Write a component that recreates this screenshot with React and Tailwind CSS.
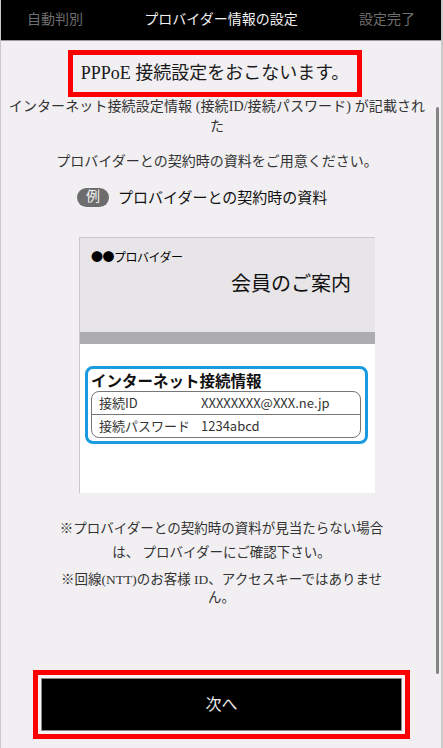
const serif = { fontFamily: '"Liberation Serif", "Noto Sans CJK JP", serif' };

function Header() {
  return (
    <div className="h-[40px] bg-black border-b border-[#9a9a9a] box-content flex items-center justify-between pl-[26px] pr-[26px] text-[14px] leading-none">
      <span className="text-[#6f6f6f]">自動判別</span>
      <span className="text-[#f2f2f2]">プロバイダー情報の設定</span>
      <span className="text-[#6f6f6f]">設定完了</span>
    </div>
  );
}

function SampleCard() {
  const sans = { fontFamily: '"Noto Sans CJK JP", "Noto Sans", sans-serif' };
  return (
    <div
      className="ml-[78px] mt-[30px] w-[296px] h-[256px] border-l border-t border-[#c8c8c8] bg-white flex flex-col"
      style={sans}
    >
      <div className="h-[94px] bg-[#e7e5e8] flex flex-col pt-[11px]">
        <div className="pl-[11px] text-[12px] leading-[16px] text-black tracking-[-0.5px]">●●プロバイダー</div>
        <div className="mt-[5px] self-end pr-[24px] text-[20px] leading-[26px] text-[#111]">会員のご案内</div>
      </div>
      <div className="h-[12px] bg-[#adacae]" />
      <div className="ml-[5px] mt-[22px] w-[283px] h-[78px] border-[3px] border-[#1a9be0] rounded-[8px] flex flex-col px-[3px]">
        <div className="text-[15.5px] leading-[22px] font-bold text-[#111]">インターネット接続情報</div>
        <div className="w-[270px] h-[47px] border border-[#777] rounded-[8px] flex flex-col text-[13px] text-[#333]">
          <div className="flex-1 flex items-center border-b border-[#777] pl-[7px]">
            <span className="w-[102px]">接続ID</span>
            <span>XXXXXXXX@XXX.ne.jp</span>
          </div>
          <div className="flex-1 flex items-center pl-[7px]">
            <span className="w-[102px]">接続パスワード</span>
            <span>1234abcd</span>
          </div>
        </div>
      </div>
    </div>
  );
}

export default function App() {
  return (
    <div
      className="relative w-[443px] h-[748px] overflow-hidden bg-[#f1eff2] border-l border-r-2 border-[#c9c9c9] flex flex-col"
      style={serif}
    >
      <Header />

      <div className="ml-[67px] mt-[9px] w-[294px] h-[47px] border-[5px] border-[#ff0000] flex items-center justify-center text-[18px] text-[#1a1a1a] whitespace-nowrap">
        PPPoE 接続設定をおこないます。
      </div>

      <p className="w-[432px] text-center text-[14px] leading-[20px] text-[#333] whitespace-nowrap tracking-[0.1px]">
        インターネット接続設定情報 (接続ID/接続パスワード) が記載され
        <br />た
      </p>

      <p className="w-[432px] mt-[15px] text-center text-[14px] leading-[20px] text-[#333] whitespace-nowrap">
        プロバイダーとの契約時の資料をご用意ください。
      </p>

      <div className="ml-[76px] mt-[15px] h-[20px] flex items-center gap-[9px]">
        <span className="w-[32px] h-[19px] rounded-full bg-[#6d6d6d] text-[#f4f4f4] text-[14px] leading-none flex items-center justify-center">
          例
        </span>
        <span
          className="text-[15px] text-[#111]"
          style={{ fontFamily: '"Noto Sans CJK JP", sans-serif' }}
        >
          プロバイダーとの契約時の資料
        </span>
      </div>

      <SampleCard />

      <p className="mt-[24px] w-[441px] text-center text-[13.5px] leading-[24px] text-[#333] whitespace-nowrap">
        ※プロバイダーとの契約時の資料が見当たらない場合
        <br />は、 プロバイダーにご確認下さい。
      </p>
      <p className="mt-[6px] w-[441px] text-center text-[13.5px] leading-[18px] text-[#333] whitespace-nowrap">
        ※回線(NTT)のお客様 ID、アクセスキーではありませ
        <br />ん。
      </p>

      <div className="ml-[32px] mt-[63px] w-[377px] h-[69px] border-[5px] border-[#ff0000] p-[3px] bg-[#f4f4f4]">
        <button className="w-full h-full bg-black border border-[#8a8a8a] text-[#ececec] text-[16px]" style={serif}>
          次へ
        </button>
      </div>

      {/* scrollbar thumb */}
      <div className="absolute left-[435px] top-[107px] w-[3px] h-[567px] bg-[#858585] rounded-full" />
    </div>
  );
}
